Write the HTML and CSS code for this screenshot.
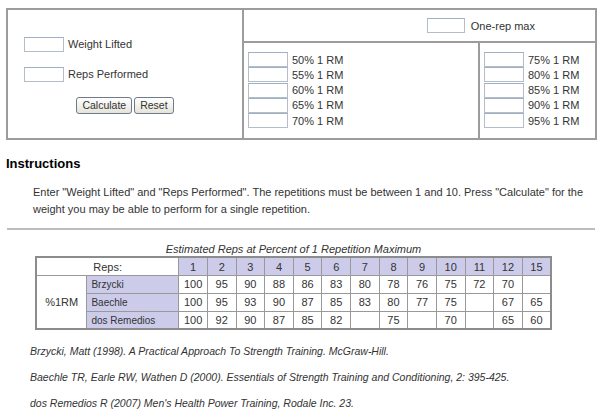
FILE: index.html
```html
<!DOCTYPE html>
<html lang="en">
<head>
    <meta charset="UTF-8">
    <title>One-Rep Max Calculator</title>
    <link rel="stylesheet" href="styles.css">
</head>
<body>
    <!-- Calculator -->
    <form class="calc" onsubmit="return false">
        <div class="calc-input">
            <div class="field">
                <input type="text" id="weight">
                <label for="weight">Weight Lifted</label>
            </div>
            <div class="field">
                <input type="text" id="reps">
                <label for="reps">Reps Performed</label>
            </div>
            <div class="buttons">
                <button type="button" class="btn">Calculate</button>
                <button type="reset" class="btn">Reset</button>
            </div>
        </div>
        <div class="calc-output">
            <div class="max-row">
                <input type="text" id="oneRep">
                <label for="oneRep">One-rep max</label>
            </div>
            <div class="pct-cols">
                <div class="pct-col">
                    <div class="pct"><input type="text"><span>50% 1 RM</span></div>
                    <div class="pct"><input type="text"><span>55% 1 RM</span></div>
                    <div class="pct"><input type="text"><span>60% 1 RM</span></div>
                    <div class="pct"><input type="text"><span>65% 1 RM</span></div>
                    <div class="pct"><input type="text"><span>70% 1 RM</span></div>
                </div>
                <div class="pct-col right">
                    <div class="pct"><input type="text"><span>75% 1 RM</span></div>
                    <div class="pct"><input type="text"><span>80% 1 RM</span></div>
                    <div class="pct"><input type="text"><span>85% 1 RM</span></div>
                    <div class="pct"><input type="text"><span>90% 1 RM</span></div>
                    <div class="pct"><input type="text"><span>95% 1 RM</span></div>
                </div>
            </div>
        </div>
    </form>

    <h3>Instructions</h3>
    <p class="instructions">Enter "Weight Lifted" and "Reps Performed". The repetitions must be between 1 and 10. Press "Calculate" for the weight you may be able to perform for a single repetition.</p>

    <hr>

    <!-- Reps table -->
    <table class="reps-table">
        <caption>Estimated Reps at Percent of 1 Repetition Maximum</caption>
        <tr>
            <td colspan="2" class="plain">Reps:</td>
            <th>1</th><th>2</th><th>3</th><th>4</th><th>5</th><th>6</th><th>7</th>
            <th>8</th><th>9</th><th>10</th><th>11</th><th>12</th><th>15</th>
        </tr>
        <tr>
            <td rowspan="3" class="plain label">%1RM</td>
            <th class="name">Brzycki</th>
            <td>100</td><td>95</td><td>90</td><td>88</td><td>86</td><td>83</td><td>80</td>
            <td>78</td><td>76</td><td>75</td><td>72</td><td>70</td><td></td>
        </tr>
        <tr>
            <th class="name">Baechle</th>
            <td>100</td><td>95</td><td>93</td><td>90</td><td>87</td><td>85</td><td>83</td>
            <td>80</td><td>77</td><td>75</td><td></td><td>67</td><td>65</td>
        </tr>
        <tr>
            <th class="name">dos Remedios</th>
            <td>100</td><td>92</td><td>90</td><td>87</td><td>85</td><td>82</td><td></td>
            <td>75</td><td></td><td>70</td><td></td><td>65</td><td>60</td>
        </tr>
    </table>

    <div class="refs">
        <p>Brzycki, Matt (1998). A Practical Approach To Strength Training. McGraw-Hill.</p>
        <p>Baechle TR, Earle RW, Wathen D (2000). Essentials of Strength Training and Conditioning, 2: 395-425.</p>
        <p>dos Remedios R (2007) Men's Health Power Training, Rodale Inc. 23.</p>
    </div>
</body>
</html>
```

FILE: styles.css
```css
* {
    box-sizing: border-box;
}

body {
    margin: 0;
    padding: 8px 3px 0 6px;
    font-family: 'Liberation Sans', Arial, sans-serif;
    color: #333;
    background: white;
}

input[type="text"] {
    width: 40px;
    height: 15px;
    margin: 0;
    padding: 0 2px;
    border: 1px solid #b5bec8;
    border-top-color: #9fb0c4;
    background: white;
    font-size: 11px;
}

/* Calculator box */
.calc {
    display: grid;
    grid-template-columns: 234px 1fr;
    width: 591px;
    border: 2px solid #9c9c9c;
    font-size: 11px;
}

.calc-input {
    display: flex;
    flex-direction: column;
    justify-content: center;
    padding: 2px 0 0 16px;
}

.field {
    display: flex;
    align-items: center;
    gap: 4px;
    margin-bottom: 15px;
}

.buttons {
    display: flex;
    justify-content: center;
    gap: 2px;
    padding-right: 16px;
}

.btn {
    height: 17px;
    padding: 0 5px;
    border: 1px solid #6f7b8a;
    border-radius: 3px;
    background: linear-gradient(#ffffff, #e4e4dc);
    font-family: 'Liberation Sans', Arial, sans-serif;
    font-size: 10.5px;
    color: #333;
    line-height: 14px;
}

.calc-output {
    border-left: 2px solid #9c9c9c;
    display: flex;
    flex-direction: column;
}

.max-row {
    display: flex;
    align-items: center;
    justify-content: flex-end;
    gap: 6px;
    height: 33px;
    padding: 0 60px 0 0;
    border-bottom: 2px solid #9c9c9c;
}

.max-row input {
    width: 38px;
}

.pct-cols {
    display: grid;
    grid-template-columns: 234px 1fr;
    padding: 0;
}

.pct-col {
    padding: 9px 0 10px 4px;
}

.pct-col.right {
    border-left: 2px solid #9c9c9c;
}

.pct {
    display: flex;
    align-items: center;
    gap: 4px;
    height: 15.25px;
}

/* Instructions */
h3 {
    margin: 16px 0 0;
    font-size: 13px;
    color: #000;
}

.instructions {
    margin: 13px 0 0 27px;
    width: 560px;
    font-size: 11px;
    line-height: 17px;
}

hr {
    margin: 10px 2px 0 1px;
    border: none;
    border-top: 2px solid #bdbdbd;
}

/* Reps table */
.reps-table {
    margin: 12px 0 0 29px;
    width: 517px;
    border-collapse: collapse;
    border: 2px solid #8c8c8c;
    font-size: 11px;
}

.reps-table caption {
    font-style: italic;
    font-size: 11px;
    line-height: 14px;
}

.reps-table th,
.reps-table td {
    height: 18px;
    padding: 0;
    border: 1px solid #999;
    text-align: center;
    font-weight: normal;
}

.reps-table th {
    width: 28.7px;
    background: #ccccea;
}

.reps-table th.name {
    width: 92px;
    padding-left: 4px;
    text-align: left;
    font-size: 10px;
}

.reps-table td.label {
    width: 51px;
}

/* References */
.refs {
    margin: 14px 0 0 24px;
    font-size: 10.5px;
    font-style: italic;
}

.refs p {
    margin: 0 0 12px;
    line-height: 14px;
}
```
